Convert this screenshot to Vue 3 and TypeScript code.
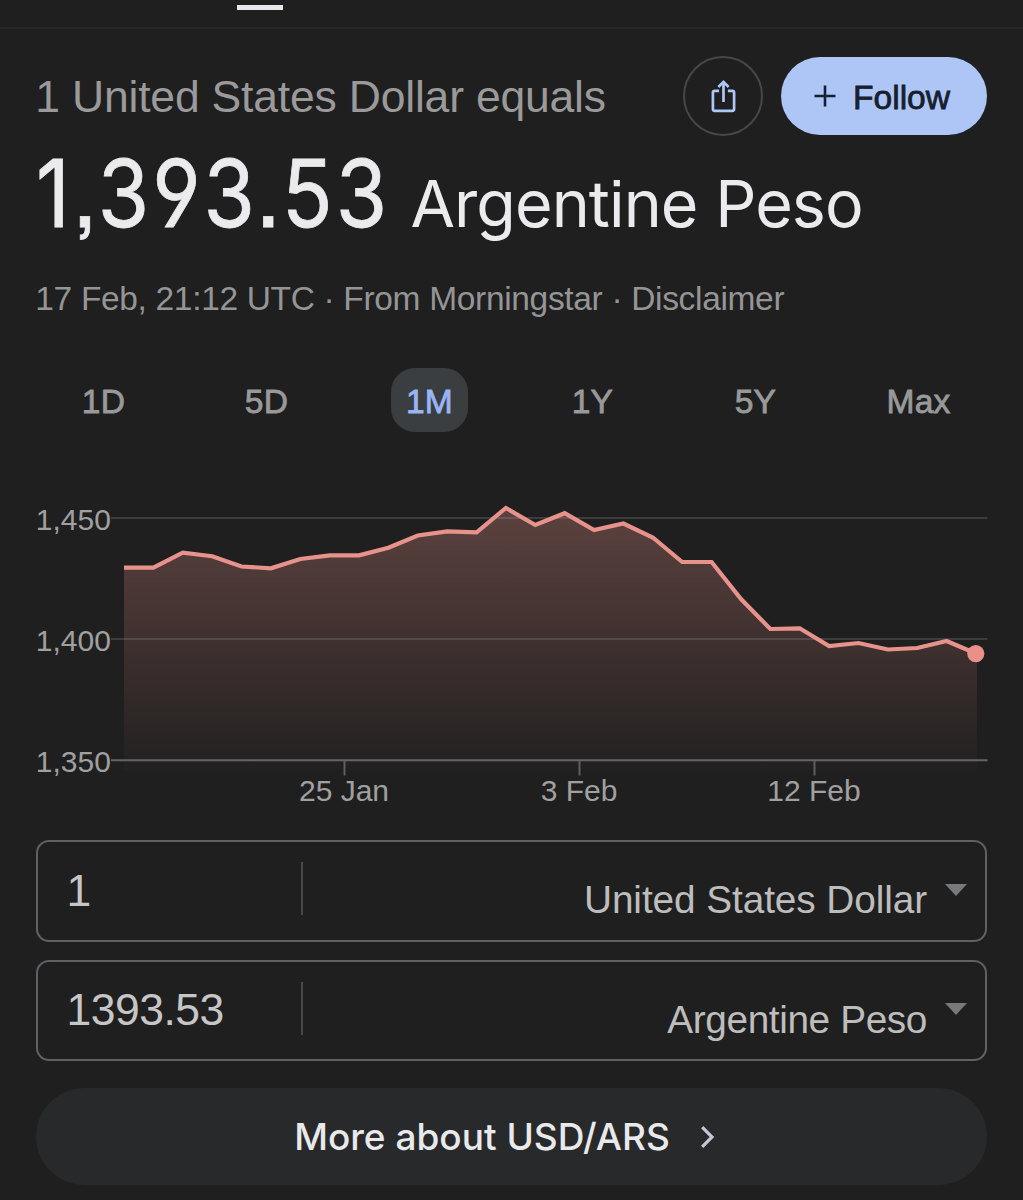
<script setup lang="ts">
import { ref, computed } from 'vue'

interface Tick { label: string; pos: number }

const ranges = ['1D', '5D', '1M', '1Y', '5Y', 'Max']
const active = ref('1M')

const fields = [
  { amount: '1', currency: 'United States Dollar' },
  { amount: '1393.53', currency: 'Argentine Peso' },
]

const yTicks: Tick[] = [
  { label: '1,450', pos: 38 },
  { label: '1,400', pos: 159 },
]
const xTicks: Tick[] = [
  { label: '25 Jan', pos: 344.5 },
  { label: '3 Feb', pos: 579.5 },
  { label: '12 Feb', pos: 814.5 },
]

// Daily closes as heights in chart units
const closes = [
  87.7, 87.7, 72.7, 76.2, 86.5, 88.3, 79, 75.3, 75.3, 67.7,
  55.5, 51.4, 52.3, 28, 45, 33.2, 50, 43.5, 57.5, 82,
  82, 119, 149, 148.3, 166, 163, 169.5, 168, 161, 173.5,
]
const left = 124
const step = 852 / (closes.length - 1)
const line = computed(() =>
  closes.map((y, i) => `${i ? 'L' : 'M'}${(left + i * step).toFixed(1)} ${y}`).join(''),
)
const area = computed(() => `${line.value}L977 173.5V290H${left}Z`)
</script>

<template>
  <main class="page">
    <nav class="topbar"><span class="indicator"></span></nav>

    <header class="head">
      <div class="equals">1 United States Dollar equals</div>
      <button class="share" aria-label="Share">
        <svg width="28" height="36" viewBox="0 0 28 36" fill="none" stroke="#aec6f8" stroke-width="2.7">
          <path d="M10.1 12.8H5.7Q3.9 12.8 3.9 14.6V31Q3.9 32.8 5.7 32.8H23.3Q25.1 32.8 25.1 31V14.6Q25.1 12.8 23.3 12.8H18.9" />
          <path d="M14.5 24V4.2M9.4 9L14.5 3.9L19.6 9" />
        </svg>
      </button>
      <button class="follow">
        <svg width="22" height="22" viewBox="0 0 22 22" stroke="#16202e" stroke-width="2.6">
          <path d="M.5 11H21.5M11 .5V21.5" />
        </svg>
        <span>Follow</span>
      </button>
    </header>

    <h1 class="rate"><span class="num">1,393.53</span><span class="unit">Argentine Peso</span></h1>
    <div class="meta">17 Feb, 21:12 UTC · From Morningstar · Disclaimer</div>

    <div class="tabs">
      <div v-for="r in ranges" :key="r" class="cell">
        <button class="tab" :class="{ on: r === active }" @click="active = r">{{ r }}</button>
      </div>
    </div>

    <svg class="chart" width="1023" height="340" viewBox="0 0 1023 340">
      <defs>
        <linearGradient id="fade" gradientUnits="userSpaceOnUse" x1="0" y1="28" x2="0" y2="290">
          <stop offset="0" stop-color="#ea9289" stop-opacity=".3" />
          <stop offset="1" stop-color="#ea9289" stop-opacity=".015" />
        </linearGradient>
      </defs>
      <g v-for="t in yTicks" :key="t.label">
        <path :d="`M111 ${t.pos}H987.5`" stroke="#3a3c3d" stroke-width="2" />
        <text x="35.8" :y="t.pos + 12">{{ t.label }}</text>
      </g>
      <text x="35.8" y="292.3">1,350</text>
      <path :d="area" fill="url(#fade)" />
      <path d="M111 280.2H987.5" stroke="#686465" stroke-width="2" />
      <g v-for="t in xTicks" :key="t.label">
        <path :d="`M${t.pos} 281V295.5`" stroke="#5c5e60" stroke-width="2" />
        <text :x="t.pos - .5" y="321" text-anchor="middle">{{ t.label }}</text>
      </g>
      <path :d="line" fill="none" stroke="#e7938b" stroke-width="4.2" />
      <circle cx="975.8" cy="173.6" r="8.6" fill="#ea9089" />
    </svg>

    <section class="fields">
      <div v-for="f in fields" :key="f.currency" class="field">
        <span class="amount">{{ f.amount }}</span>
        <span class="divider"></span>
        <span class="currency">{{ f.currency }}</span>
        <svg class="caret" width="22" height="12" viewBox="0 0 22 12"><path d="M0 0H22L11 12Z" fill="#77797b" /></svg>
      </div>
    </section>

    <button class="more">
      <span>More about USD/ARS</span>
      <svg width="16" height="24" viewBox="0 0 16 24" fill="none" stroke="#c3c6d6" stroke-width="3.2">
        <path d="M2.2 2.2L12 12L2.2 21.8" />
      </svg>
    </button>
  </main>
</template>

<style>
body { margin: 0; background: #1f1f1f; }
</style>

<style scoped>
.page {
  width: 1023px;
  height: 1200px;
  overflow: hidden;
  background: #1f1f1f;
  font-family: "Liberation Sans", Arial, sans-serif;
}
button { font: inherit; border: 0; padding: 0; margin: 0; background: none; color: inherit; }
.topbar { box-sizing: border-box; height: 29px; padding: 5px 0 0 237px; border-bottom: 2px solid #25272b; }
.indicator { display: block; width: 46px; height: 5px; background: #e8e8eb; }

.head { display: flex; align-items: center; height: 80px; margin-top: 27px; padding: 0 36px 0 35.3px; }
.equals { flex: 1; padding-top: 1px; font-size: 44.5px; letter-spacing: -.2px; line-height: 50px; color: #9a9a9b; white-space: nowrap; }
.share {
  box-sizing: border-box; width: 80px; height: 80px; border: 2px solid #464748; border-radius: 50%;
  display: flex; align-items: center; justify-content: center; margin-right: 18px;
}
.follow {
  box-sizing: border-box; width: 206px; height: 78px; border-radius: 39px; background: #aec6f6; color: #16202e;
  display: flex; align-items: center; justify-content: center; gap: 16.5px; padding-right: 3.5px;
  font-size: 33.6px; -webkit-text-stroke: .8px #16202e;
}
.follow span { padding-top: 3px; }

.rate {
  display: flex; align-items: baseline; height: 88px; margin: 13px 0 0; padding-left: 35.5px;
  font-family: Inter, sans-serif; font-weight: 400; line-height: 88px; color: #ebebed; white-space: nowrap;
  font-feature-settings: "cv04", "ss07";
}
.num { width: 375px; font-size: 93px; letter-spacing: 3.4px; transform: scaleX(.895); transform-origin: 0 50%; -webkit-text-stroke: .8px currentColor; }
.unit { font-size: 64.5px; letter-spacing: -.93px; word-spacing: .5px; }
.meta { margin-top: 38px; padding-left: 35.3px; height: 48px; line-height: 48px; font-size: 33.5px; letter-spacing: -.33px; color: #959596; white-space: nowrap; }

.tabs { display: flex; height: 64px; margin-top: 45px; padding: 0 22px; }
.cell { width: 163px; display: flex; justify-content: center; }
.tab {
  height: 64px; padding: 4px 14.5px 0; border-radius: 24px;
  font-size: 33.6px; letter-spacing: .2px; color: #98999a; -webkit-text-stroke: .8px currentColor;
}
.tab.on { background: #3b3e40; color: #9ab5f4; }

.chart { display: block; margin-top: 48px; }
.chart text { font-size: 30px; fill: #a0a0a1; }

.fields { display: flex; flex-direction: column; gap: 18px; margin: 20px 36px 0; }
.field {
  box-sizing: border-box; height: 101.5px; border: 2px solid #606164; border-radius: 13px;
  display: flex; align-items: center; padding: 0 18px 0 28.5px;
}
.amount { width: 234.5px; font-size: 44.5px; letter-spacing: -.5px; color: #c6c6c6; }
.divider { width: 2px; height: 53px; background: #47484a; margin-bottom: 4px; }
.currency { flex: 1; text-align: right; padding-top: 19px; font-size: 38.8px; line-height: 44px; letter-spacing: -.1px; color: #bdbdbd; }
.field:last-child .currency { letter-spacing: -.4px; }
.caret { margin: 0 0 2px 18px; }

.more {
  box-sizing: border-box; width: 951px; height: 97px; margin: 27px 36px 0; padding-right: 13px; border-radius: 49px; background: #28292a;
  display: flex; align-items: center; justify-content: center; gap: 30px;
  font: 500 37px Inter, sans-serif; color: #e9e9ec;
}
</style>
